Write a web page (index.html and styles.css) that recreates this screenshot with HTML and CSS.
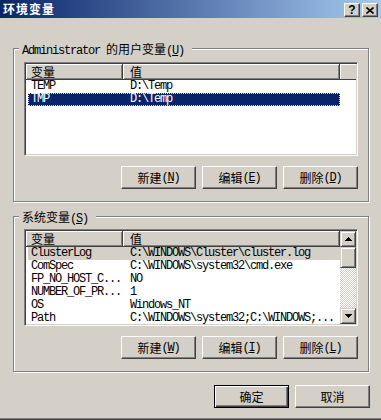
FILE: index.html
```html
<!DOCTYPE html>
<html>
<head lang="zh-CN">
    <meta charset="UTF-8">
    <title>环境变量</title>
    <link rel="stylesheet" href="styles.css">
</head>
<body>
<div class="window">
    <div class="titlebar">
        <span class="title">环境变量</span>
        <div class="caption-buttons">
            <span class="cap-btn help">?</span>
            <span class="cap-btn close">
                <svg width="8" height="7" viewBox="0 0 8 7"><path d="M0.5 0.5L7.5 6.5M7.5 0.5L0.5 6.5" stroke="#000" stroke-width="1.6" fill="none"/></svg>
            </span>
        </div>
    </div>

    <div class="client">
        <!-- 用户变量 -->
        <div class="group">
            <div class="group-title"><span class="en">Administrator </span>的用户变量<span class="en">(<u>U</u>)</span></div>
            <div class="list list-user">
                <div class="list-main">
                    <div class="header">
                        <span class="hcell col-name">变量</span>
                        <span class="hcell col-value">值</span>
                        <span class="hcell col-fill"></span>
                    </div>
                    <div class="row"><span class="cell-name">TEMP</span><span class="cell-value">D:\Temp</span></div>
                    <div class="row selected"><span class="cell-name">TMP</span><span class="cell-value">D:\Temp</span></div>
                </div>
            </div>
            <div class="buttons">
                <button class="btn">新建<span class="en">(<u>N</u>)</span></button>
                <button class="btn">编辑<span class="en">(<u>E</u>)</span></button>
                <button class="btn">删除<span class="en">(<u>D</u>)</span></button>
            </div>
        </div>

        <!-- 系统变量 -->
        <div class="group group-system">
            <div class="group-title">系统变量<span class="en">(<u>S</u>)</span></div>
            <div class="list list-system">
                <div class="list-main">
                    <div class="header">
                        <span class="hcell col-name">变量</span>
                        <span class="hcell col-value">值</span>
                    </div>
                    <div class="row inactive"><span class="cell-name">ClusterLog</span><span class="cell-value">C:\WINDOWS\Cluster\cluster.log</span></div>
                    <div class="row"><span class="cell-name">ComSpec</span><span class="cell-value">C:\WINDOWS\system32\cmd.exe</span></div>
                    <div class="row"><span class="cell-name">FP_NO_HOST_C...</span><span class="cell-value">NO</span></div>
                    <div class="row"><span class="cell-name">NUMBER_OF_PR...</span><span class="cell-value">1</span></div>
                    <div class="row"><span class="cell-name">OS</span><span class="cell-value">Windows_NT</span></div>
                    <div class="row"><span class="cell-name">Path</span><span class="cell-value">C:\WINDOWS\system32;C:\WINDOWS;...</span></div>
                </div>
                <div class="scrollbar">
                    <span class="raised sb-btn">
                        <svg width="7" height="4" viewBox="0 0 7 4"><polygon points="3.5,0 7,4 0,4" fill="#000" shape-rendering="crispEdges"/></svg>
                    </span>
                    <span class="raised sb-thumb"></span>
                    <span class="sb-track"></span>
                    <span class="raised sb-btn">
                        <svg width="7" height="4" viewBox="0 0 7 4"><polygon points="0,0 7,0 3.5,4" fill="#000" shape-rendering="crispEdges"/></svg>
                    </span>
                </div>
            </div>
            <div class="buttons">
                <button class="btn">新建<span class="en">(<u>W</u>)</span></button>
                <button class="btn">编辑<span class="en">(<u>I</u>)</span></button>
                <button class="btn">删除<span class="en">(<u>L</u>)</span></button>
            </div>
        </div>

        <div class="footer">
            <button class="btn default">确定</button>
            <button class="btn">取消</button>
        </div>
    </div>
</div>
</body>
</html>
```

FILE: styles.css
```css
*{
    margin: 0;
    padding: 0;
    box-sizing: border-box;
}
body{
    width: 381px;
    height: 420px;
    overflow: hidden;
    background: #D4D0C8;
    font-family: "Noto Sans CJK SC", sans-serif;
    font-size: 12px;
    color: #000;
}
.en{
    font-family: "Liberation Mono", "Noto Sans CJK SC", monospace;
    letter-spacing: -1.2px;
}
.window{
    height: 420px;
    box-shadow: inset 0 -1px #404040, inset 0 -2px #808080;
}

/* 标题栏 */
.titlebar{
    height: 18px;
    display: flex;
    align-items: center;
    justify-content: space-between;
    padding: 0 3px;
    background: linear-gradient(to right, #0A246A, #A6CAF0);
}
.title{
    color: #fff;
    font-weight: bold;
    letter-spacing: 1px;
    line-height: 18px;
}
.caption-buttons{
    display: flex;
    gap: 2px;
    margin-top: 2px;
}
.cap-btn{
    width: 16px;
    height: 14px;
    display: flex;
    align-items: center;
    justify-content: center;
    background: #D4D0C8;
    border: 1px solid;
    border-color: #fff #404040 #404040 #fff;
    box-shadow: inset -1px -1px #808080;
    font: bold 12px "Liberation Sans", sans-serif;
    line-height: 1;
}

.client{
    padding: 30px 12px 0 13px;
}

/* 分组框 */
.group{
    border: 1px solid #808080;
    box-shadow: inset 1px 1px #fff, 1px 1px #fff;
    padding: 0 10px 12px 10px;
}
.group-system{
    margin-top: 14px;
}
.group-title{
    width: fit-content;
    height: 13px;
    line-height: 13px;
    margin: -7px 0 0 -5px;
    padding: 0 8px 0 3px;
    background: #D4D0C8;
    white-space: nowrap;
}

/* 列表 */
.list{
    width: 334px;
    display: flex;
    margin-top: 7px;
    padding: 1px;
    background: #fff;
    border: 1px solid;
    border-color: #808080 #fff #fff #808080;
    box-shadow: inset 1px 1px #404040, inset -1px -1px #D4D0C8;
}
.list-user{
    height: 94px;
}
.list-system{
    height: 97px;
    margin-top: 6px;
}
.list-main{
    flex: 1;
    min-width: 0;
    overflow: hidden;
}
.header{
    display: flex;
    height: 16px;
}
.hcell{
    height: 16px;
    display: flex;
    align-items: center;
    background: #D4D0C8;
    border-right: 1px solid #404040;
    border-bottom: 1px solid #404040;
    box-shadow: inset 1px 1px #fff, inset -1px -1px #808080;
    line-height: 15px;
    white-space: nowrap;
}
.col-name{
    width: 97px;
    padding-left: 5px;
}
.col-value{
    width: 217px;
    padding-left: 7px;
}
.col-fill{
    flex: 1;
    border-right: none;
    box-shadow: inset 1px 1px #fff;
}
.row{
    display: flex;
    width: 312px;
    height: 13px;
    line-height: 13px;
    margin-left: 2px;
    font-family: "Liberation Mono", monospace;
    letter-spacing: -1.2px;
    white-space: nowrap;
}
.cell-name{
    width: 95px;
    padding-left: 3px;
    overflow: hidden;
}
.cell-value{
    padding-left: 7px;
}
.row.selected{
    background: #0A246A;
    color: #fff;
    outline: 1px dotted #F5DB95;
    outline-offset: -1px;
}
.row.inactive{
    background: #D4D0C8;
}

/* 滚动条 */
.scrollbar{
    width: 16px;
    display: flex;
    flex-direction: column;
    background: conic-gradient(#fff 25%, #D4D0C8 0 50%, #fff 0 75%, #D4D0C8 0) 0 0 / 2px 2px;
}
.raised{
    background: #D4D0C8;
    border: 1px solid;
    border-color: #D4D0C8 #404040 #404040 #D4D0C8;
    box-shadow: inset 1px 1px #fff, inset -1px -1px #808080;
}
.sb-btn{
    height: 16px;
    display: flex;
    align-items: center;
    justify-content: center;
}
.sb-thumb{
    height: 21px;
}
.sb-track{
    flex: 1;
}

/* 按钮 */
.buttons{
    display: flex;
    justify-content: flex-end;
    gap: 6px;
    margin-top: 10px;
}
.btn{
    width: 75px;
    height: 23px;
    display: flex;
    align-items: center;
    justify-content: center;
    background: #D4D0C8;
    border: 1px solid;
    border-color: #fff #404040 #404040 #fff;
    box-shadow: inset -1px -1px #808080;
    font-family: "Noto Sans CJK SC", sans-serif;
    font-size: 12px;
    color: #000;
}
.btn.default{
    border-color: #000;
    box-shadow: inset 1px 1px #fff, inset -1px -1px #404040, inset -2px -2px #808080;
}
.footer{
    display: flex;
    justify-content: flex-end;
    gap: 6px;
    margin: 13px -1px 0 0;
}
```
